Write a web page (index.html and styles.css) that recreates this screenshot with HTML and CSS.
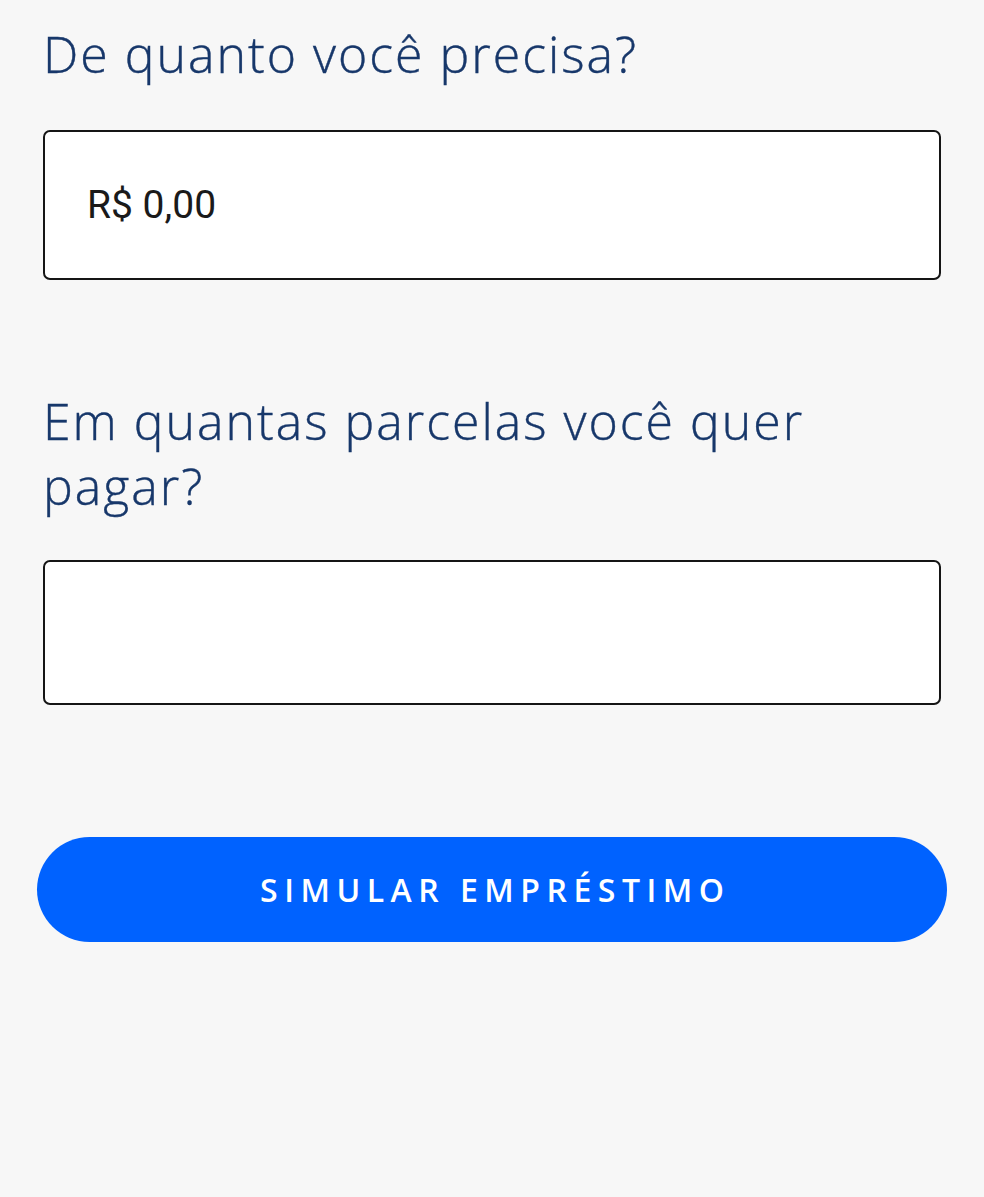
FILE: index.html
```html
<!DOCTYPE html>
<html lang="pt-BR">
<head>
<meta charset="utf-8">
<title>Simular empréstimo</title>
<link rel="stylesheet" href="styles.css">
</head>
<body>
<main class="form">
  <label class="question" for="valor">De quanto você precisa?</label>
  <div class="field field-amount">
    <input id="valor" class="field-input" type="text" value="R$ 0,00">
  </div>
  <label class="question question-second" for="parcelas">Em quantas parcelas você quer pagar?</label>
  <div class="field field-installments">
    <input id="parcelas" class="field-input" type="text" value="">
  </div>
  <button class="submit" type="button">SIMULAR EMPRÉSTIMO</button>
</main>
</body>
</html>
```
FILE: styles.css
```css
html, body {
  margin: 0;
  padding: 0;
}
body {
  background: #f7f7f7;
  width: 984px;
  height: 1197px;
  overflow: hidden;
}
.form {
  display: flex;
  flex-direction: column;
  padding: 22px 43px 0 43px;
}
.question {
  display: block;
  font-family: "Open Sans", "Lato", sans-serif;
  font-weight: 300;
  font-size: 50px;
  line-height: 65px;
  letter-spacing: 2px;
  color: #17376a;
  margin: 0;
  -webkit-text-stroke: 0.4px #17376a;
}
.question-second {
  margin-top: 109px;
  max-width: 830px;
}
.field {
  margin-top: 43px;
  background: #ffffff;
  border: 2px solid #151515;
  border-radius: 7px;
  display: flex;
  align-items: center;
  box-sizing: border-box;
}
.field-amount {
  height: 150px;
}
.field-installments {
  height: 145px;
  margin-top: 41px;
}
.field-input {
  border: 0;
  outline: none;
  background: transparent;
  width: 100%;
  padding: 0 42px;
  font-family: "Roboto", "Liberation Sans", sans-serif;
  font-size: 39px;
  color: #1a1a1a;
}
.submit {
  margin: 132px -6px 0 -6px;
  height: 105px;
  border: 0;
  border-radius: 53px;
  background: #0062ff;
  color: #ffffff;
  font-family: "Open Sans", "Lato", sans-serif;
  font-weight: 560;
  font-size: 32px;
  letter-spacing: 6.5px;
  text-indent: 6.5px;
  cursor: pointer;
}
```
